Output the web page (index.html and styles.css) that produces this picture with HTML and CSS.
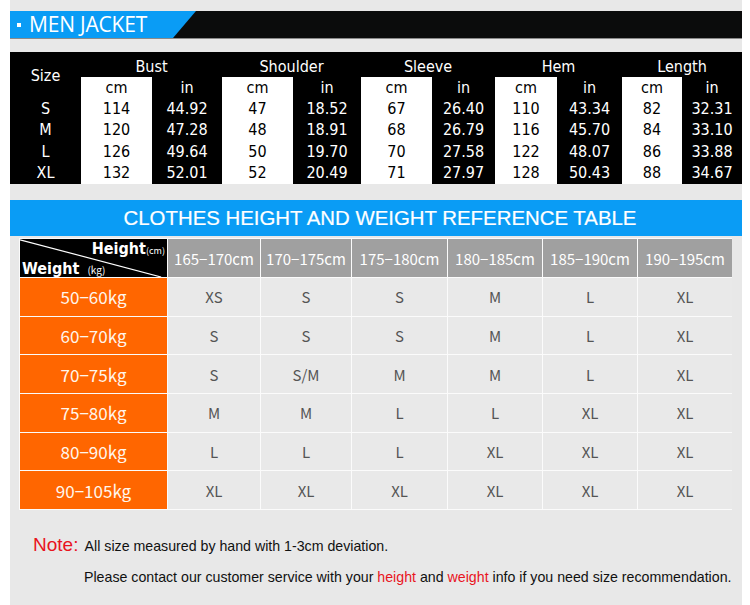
FILE: index.html
```html
<!DOCTYPE html>
<html>
<head>
<meta charset="utf-8">
<link rel="stylesheet" href="styles.css">
</head>
<body>
<div class="panel">
  <div class="titlebar">
    <div class="title"><span class="sq"></span>MEN JACKET</div>
  </div>

  <div class="measure">
    <div class="c size-h">Size</div>
    <div class="c grp g1">Bust</div>
    <div class="c grp g2">Shoulder</div>
    <div class="c grp g3">Sleeve</div>
    <div class="c grp g4">Hem</div>
    <div class="c grp g5">Length</div>

    <div class="c w">cm</div><div class="c">in</div>
    <div class="c w">cm</div><div class="c">in</div>
    <div class="c w">cm</div><div class="c">in</div>
    <div class="c w">cm</div><div class="c">in</div>
    <div class="c w">cm</div><div class="c">in</div>

    <div class="c">S</div>
    <div class="c w">114</div><div class="c">44.92</div>
    <div class="c w">47</div><div class="c">18.52</div>
    <div class="c w">67</div><div class="c">26.40</div>
    <div class="c w">110</div><div class="c">43.34</div>
    <div class="c w">82</div><div class="c">32.31</div>

    <div class="c">M</div>
    <div class="c w">120</div><div class="c">47.28</div>
    <div class="c w">48</div><div class="c">18.91</div>
    <div class="c w">68</div><div class="c">26.79</div>
    <div class="c w">116</div><div class="c">45.70</div>
    <div class="c w">84</div><div class="c">33.10</div>

    <div class="c">L</div>
    <div class="c w">126</div><div class="c">49.64</div>
    <div class="c w">50</div><div class="c">19.70</div>
    <div class="c w">70</div><div class="c">27.58</div>
    <div class="c w">122</div><div class="c">48.07</div>
    <div class="c w">86</div><div class="c">33.88</div>

    <div class="c">XL</div>
    <div class="c w">132</div><div class="c">52.01</div>
    <div class="c w">52</div><div class="c">20.49</div>
    <div class="c w">71</div><div class="c">27.97</div>
    <div class="c w">128</div><div class="c">50.43</div>
    <div class="c w">88</div><div class="c">34.67</div>
  </div>

  <div class="banner">CLOTHES HEIGHT AND WEIGHT REFERENCE TABLE</div>

  <div class="ref">
    <div class="corner">
      <svg class="diag" viewBox="0 0 100 100" preserveAspectRatio="none"><line x1="0" y1="2" x2="96" y2="100" stroke="#fff" stroke-width="1.2" vector-effect="non-scaling-stroke"/></svg>
      <div class="hl">Height<small>(cm)</small></div>
      <div class="wl">Weight <small>(kg)</small></div>
    </div>
    <div class="hh">165−170cm</div>
    <div class="hh">170−175cm</div>
    <div class="hh">175−180cm</div>
    <div class="hh">180−185cm</div>
    <div class="hh">185−190cm</div>
    <div class="hh">190−195cm</div>

    <div class="wt">50−60kg</div>
    <div class="d">XS</div><div class="d">S</div><div class="d">S</div><div class="d">M</div><div class="d">L</div><div class="d">XL</div>

    <div class="wt">60−70kg</div>
    <div class="d">S</div><div class="d">S</div><div class="d">S</div><div class="d">M</div><div class="d">L</div><div class="d">XL</div>

    <div class="wt">70−75kg</div>
    <div class="d">S</div><div class="d">S/M</div><div class="d">M</div><div class="d">M</div><div class="d">L</div><div class="d">XL</div>

    <div class="wt">75−80kg</div>
    <div class="d">M</div><div class="d">M</div><div class="d">L</div><div class="d">L</div><div class="d">XL</div><div class="d">XL</div>

    <div class="wt">80−90kg</div>
    <div class="d">L</div><div class="d">L</div><div class="d">L</div><div class="d">XL</div><div class="d">XL</div><div class="d">XL</div>

    <div class="wt">90−105kg</div>
    <div class="d">XL</div><div class="d">XL</div><div class="d">XL</div><div class="d">XL</div><div class="d">XL</div><div class="d">XL</div>
  </div>

  <div class="notes">
    <p class="n1"><span class="note">Note:</span> All size measured by hand with 1-3cm deviation.</p>
    <p class="n2">Please contact our customer service with your <span class="red">height</span> and <span class="red">weight</span> info if you need size recommendation.</p>
  </div>
</div>
</body>
</html>
```

FILE: styles.css
```css
html, body {
  margin: 0;
  padding: 0;
  background: #ffffff;
}

.panel {
  margin-left: 10px;
  width: 732px;
  height: 605px;
  background: #e8e8e8;
  padding-top: 11px;
  box-sizing: border-box;
  overflow: hidden;
}

/* title bar */
.titlebar {
  height: 27px;
  background: #0b0c0c;
  border-bottom: 1px solid #8a8a8a;
}
.title {
  width: 186px;
  height: 27px;
  background: #0a9cf5;
  clip-path: polygon(0 0, 100% 0, calc(100% - 23px) 100%, 0 100%);
  color: #fff;
  font-family: "Open Sans", "DejaVu Sans", sans-serif;
  font-size: 21px;
  line-height: 27px;
  display: flex;
  align-items: center;
  letter-spacing: -0.2px;
}
.sq {
  width: 4px;
  height: 4px;
  background: #fff;
  margin: 0 8px 0 7px;
}

/* measurement table */
.measure {
  margin-top: 13px;
  display: grid;
  grid-template-columns: 71px 71px 70px 71px 68px 71px 63px 62px 65px 60px 60px;
  grid-template-rows: 25px repeat(5, 21.4px);
  background: #000;
  color: #fff;
  font-family: "DejaVu Sans Condensed", "DejaVu Sans", sans-serif;
  font-stretch: condensed;
  font-size: 16px;
}
.measure .c {
  display: flex;
  align-items: center;
  justify-content: center;
  line-height: 1;
}
.measure .w {
  background: #fff;
  color: #000;
}
.size-h {
  grid-row: 1 / span 2;
  padding-top: 2px;
}
.grp {
  grid-column: span 2;
  padding-top: 4px;
}

/* banner */
.banner {
  margin-top: 16px;
  height: 36px;
  background: #0a9cf5;
  color: #fff;
  font-family: "Liberation Sans", Arial, sans-serif;
  font-size: 20.4px;
  line-height: 36px;
  text-align: center;
  padding-left: 8px;
  box-sizing: border-box;
  -webkit-text-stroke: 0.2px #fff;
}

/* reference table */
.ref {
  margin: 2px 0 0 9px;
  width: 711px;
  display: grid;
  grid-template-columns: 147px 92px 90px 95px 94px 94px 94px;
  grid-template-rows: 38px repeat(6, 37.7px);
  gap: 1px;
  background: #fbfbfb;
  border: 1px solid #fbfbfb;
  font-family: "Noto Sans CJK JP", "DejaVu Sans", sans-serif;
}
.corner {
  position: relative;
  background: #000;
  color: #fff;
  font-family: "DejaVu Sans Condensed", "DejaVu Sans", sans-serif;
  font-stretch: condensed;
  font-weight: bold;
  font-size: 16px;
  display: flex;
  flex-direction: column;
  justify-content: space-between;
  padding: 0 2px 1px 2px;
  overflow: hidden;
}
.diag {
  position: absolute;
  left: 0;
  top: 0;
  width: 100%;
  height: 100%;
}
.corner small {
  font-size: 9px;
  font-weight: normal;
  font-family: "Noto Sans CJK JP", sans-serif;
}
.hl {
  align-self: flex-end;
  line-height: 19px;
  position: relative;
}
.wl {
  align-self: flex-start;
  line-height: 17px;
  position: relative;
}
.wl small {
  font-size: 10px;
  margin-left: 3px;
}
.hh {
  background: #a0a0a0;
  color: #fff;
  font-size: 15px;
  display: flex;
  align-items: center;
  justify-content: center;
  padding-top: 1px;
}
.wt {
  background: #ff6600;
  color: #fff6ec;
  font-size: 17px;
  display: flex;
  align-items: center;
  justify-content: center;
}
.d {
  background: #e9e9e9;
  color: #555;
  font-size: 15px;
  display: flex;
  align-items: center;
  justify-content: center;
}

/* notes */
.notes {
  font-family: "Liberation Sans", Arial, sans-serif;
  font-size: 14.2px;
  color: #111;
}
.notes p {
  margin: 0;
}
.n1 {
  margin-top: 24px !important;
  padding-left: 23px;
  line-height: 22px;
}
.note {
  color: #e8141e;
  font-size: 19px;
  margin-right: 3px;
}
.n2 {
  margin-top: 10px !important;
  padding-left: 74px;
  line-height: 20px;
}
.red {
  color: #e8141e;
}
```
